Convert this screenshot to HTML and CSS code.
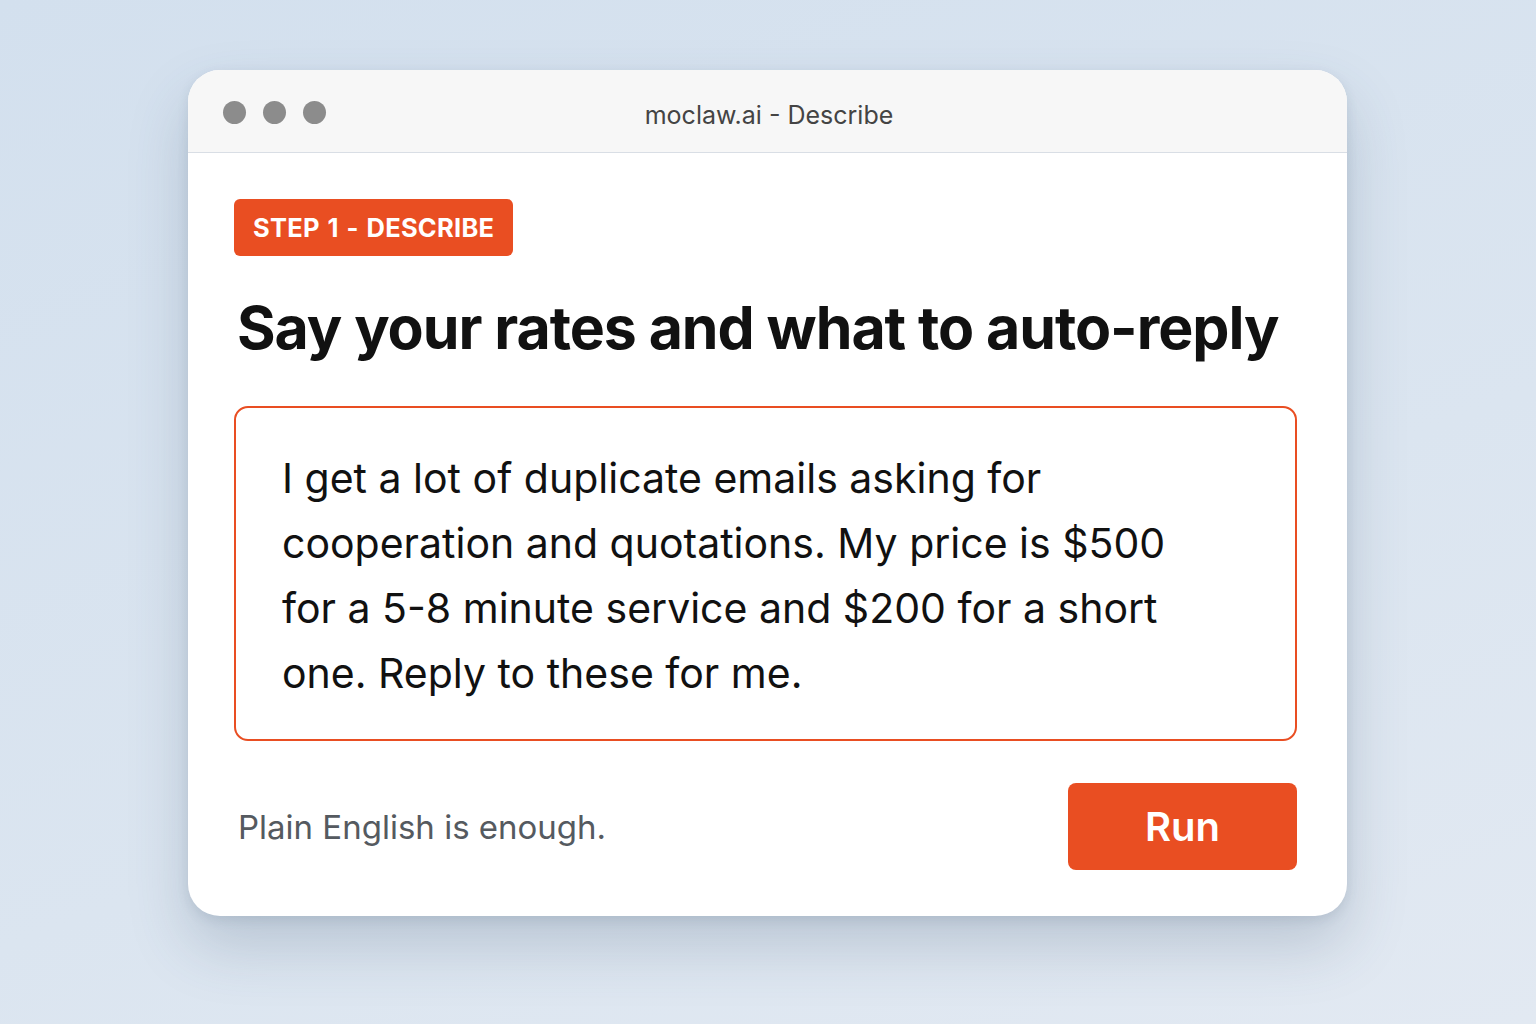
FILE: index.html
```html
<!DOCTYPE html>
<html lang="en">
<head>
<meta charset="utf-8">
<title>moclaw.ai - Describe</title>
<link rel="stylesheet" href="styles.css">
</head>
<body>
<div class="stage">
  <div class="window">
    <div class="titlebar">
      <div class="dots"><span class="dot"></span><span class="dot"></span><span class="dot"></span></div>
      <div class="title">moclaw.ai - Describe</div>
    </div>
    <div class="content">
      <div class="badge">STEP 1 - DESCRIBE</div>
      <h1 class="heading">Say your rates and what to auto-reply</h1>
      <div class="prompt">
        <p class="prompt-text">I get a lot of duplicate emails asking for cooperation and quotations. My price is $500 for a 5-8 minute service and $200 for a short one. Reply to these for me.</p>
      </div>
      <div class="footer">
        <span class="hint">Plain English is enough.</span>
        <button class="run">Run</button>
      </div>
    </div>
  </div>
</div>
</body>
</html>
```

FILE: styles.css
```css
* { box-sizing: border-box; }
html, body { margin: 0; padding: 0; }
body {
  width: 1536px;
  height: 1024px;
  overflow: hidden;
  font-family: Inter, "Noto Sans", sans-serif;
  background: linear-gradient(160deg, #d3e0ee 0%, #dbe5f0 60%, #e2e9f2 100%);
}
.stage {
  padding: 70px 0 0 188px;
}
.window {
  width: 1159px;
  height: 846px;
  background: #ffffff;
  border-radius: 32px;
  overflow: hidden;
  box-shadow: 0 30px 60px rgba(60, 80, 110, 0.22), 0 4px 12px rgba(60, 80, 110, 0.12);
}
.titlebar {
  height: 83px;
  background: #f7f7f7;
  border-bottom: 1px solid #d9dee5;
  position: relative;
  display: flex;
  align-items: center;
}
.dots {
  display: flex;
  gap: 17px;
  padding-left: 35px;
  margin-top: 2px;
}
.dot {
  width: 23px;
  height: 23px;
  border-radius: 50%;
  background: #8c8c8c;
}
.title {
  position: absolute;
  left: 0;
  right: 0;
  top: 0;
  bottom: 0;
  display: flex;
  align-items: center;
  justify-content: center;
  font-size: 25px;
  color: #444444;
  padding-left: 3px;
  padding-top: 8px;
}
.content {
  padding: 46px 50px 0 46px;
}
.badge {
  display: inline-block;
  background: #e94e22;
  color: #ffffff;
  font-weight: 700;
  font-size: 25.5px;
  line-height: 57px;
  height: 57px;
  padding: 0 19px;
  border-radius: 6px;
  letter-spacing: 0.25px;
  word-spacing: 1.5px;
}
.heading {
  margin: 36px 0 0 3px;
  font-size: 59px;
  font-weight: 700;
  color: #111111;
  letter-spacing: -1.05px;
  line-height: 72px;
  white-space: nowrap;
}
.prompt {
  margin-top: 42px;
  height: 335px;
  border: 2px solid #e94e22;
  border-radius: 14px;
  padding: 38px 46px 0 46px;
}
.prompt-text {
  margin: 0;
  max-width: 920px;
  font-size: 41px;
  line-height: 65px;
  color: #111111;
}
.footer {
  margin-top: 42px;
  display: flex;
  justify-content: space-between;
  align-items: center;
}
.hint {
  font-size: 33px;
  color: #555a60;
  padding-left: 4px;
}
.run {
  width: 229px;
  height: 87px;
  background: #e94e22;
  border: none;
  border-radius: 8px;
  color: #ffffff;
  font-family: Inter, "Noto Sans", sans-serif;
  font-size: 40px;
  font-weight: 600;
}
```
